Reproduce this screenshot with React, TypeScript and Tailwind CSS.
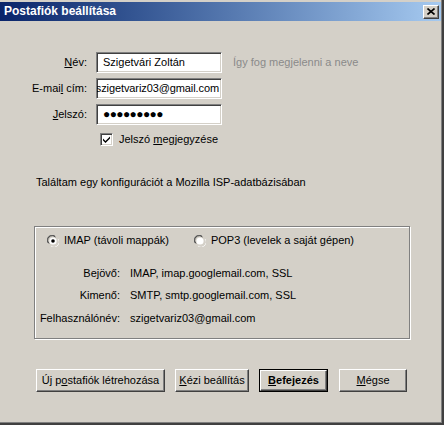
import React from "react";

const sunken =
  "border border-t-[#808080] border-l-[#808080] border-b-white border-r-white shadow-[inset_1px_1px_0_#404040,inset_-1px_-1px_0_#d4d0c8]";
const raised =
  "border border-t-white border-l-white border-b-[#404040] border-r-[#404040] shadow-[inset_-1px_-1px_0_#808080]";

const Radio = ({ checked }: { checked?: boolean }) => (
  <svg width="12" height="12" viewBox="0 0 12 12" className="shrink-0">
    <path d="M1 8 A5 5 0 0 1 8 1" stroke="#808080" strokeWidth="1" fill="none" />
    <path d="M2 8.5 A4 4 0 0 1 8.5 2" stroke="#404040" strokeWidth="1" fill="none" />
    <path d="M11 4 A5 5 0 0 1 4 11" stroke="#ffffff" strokeWidth="1" fill="none" />
    <path d="M10 3.5 A4 4 0 0 1 3.5 10" stroke="#d4d0c8" strokeWidth="1" fill="none" />
    <circle cx="6" cy="6" r="3.6" fill="#ffffff" />
    {checked && <circle cx="6" cy="6" r="1.8" fill="#000000" />}
  </svg>
);

const Checkbox = () => (
  <div className={`w-[13px] h-[13px] bg-white flex items-center justify-center ${sunken}`}>
    <svg width="9" height="9" viewBox="0 0 9 9">
      <path d="M1 3.5 L3.5 6 L8 1.5 L8 3.5 L3.5 8 L1 5.5 Z" fill="#000000" />
    </svg>
  </div>
);

const Btn = ({ children, def, className }: { children: React.ReactNode; def?: boolean; className: string }) => (
  <div className={`h-[23px] ${className} ${def ? "border border-black" : ""}`}>
    <div className={`h-full w-full flex items-center justify-center ${raised}`}>{children}</div>
  </div>
);

export default function App() {
  return (
    <div className="w-[444px] h-[425px] bg-[#d4d0c8] border-r-2 border-b-2 border-[#404040] font-['Liberation_Sans',Arial,sans-serif] text-[11px] text-black leading-[13px]">
      <div className="h-full border-r border-b border-[#808080] flex flex-col">
        <div className="mt-[2px] h-[19px] flex items-center justify-between pl-[4px] pr-[2px] bg-linear-to-r from-[#0a246a] to-[#a6caf0]">
          <span className="font-bold text-white text-[12px]">Postafiók beállítása</span>
          <div className={`w-[16px] h-[14px] bg-[#d4d0c8] flex items-center justify-center ${raised}`}>
            <svg width="8" height="7" viewBox="0 0 8 7">
              <path d="M0.5 0.5 L7.5 6.5 M7.5 0.5 L0.5 6.5" stroke="#000" strokeWidth="1.6" />
            </svg>
          </div>
        </div>

        <div className="pt-[31px] grid grid-cols-[87px_126px_auto] gap-x-[9px] gap-y-[5px] items-center">
          <span className="text-right">
            <span className="underline">N</span>év:
          </span>
          <div className={`h-[21px] bg-white flex items-center pl-[6px] ${sunken}`}>Szigetvári Zoltán</div>
          <span className="pl-[2px] text-[#8a8a8a]">Így fog megjelenni a neve</span>

          <span className="text-right">
            E-mai<span className="underline">l</span> cím:
          </span>
          <div className={`h-[21px] bg-white flex items-center justify-end pr-[2px] overflow-hidden whitespace-nowrap tracking-[-0.1px] ${sunken}`}>
            szigetvariz03@gmail.com
          </div>
          <span />

          <span className="text-right">
            <span className="underline">J</span>elszó:
          </span>
          <div className={`h-[21px] bg-white flex items-center pl-[6px] tracking-[-0.6px] text-[12px] ${sunken}`}>
            ●●●●●●●●●
          </div>
          <span />
        </div>

        <div className="mt-[8px] ml-[100px] flex items-center gap-[6px]">
          <Checkbox />
          <span>
            Jelszó <span className="underline">m</span>egjegyzése
          </span>
        </div>

        <div className="mt-[30px] ml-[36px]">Találtam egy konfigurációt a Mozilla ISP-adatbázisában</div>

        <div className="mt-[37px] ml-[34px] w-[376px] h-[113px] border border-[#808080] shadow-[1px_1px_0_#ffffff,inset_1px_1px_0_#ffffff] flex flex-col">
          <div className="mt-[7px] flex items-center h-[13px]">
            <div className="ml-[12px] flex items-center gap-[5px]">
              <Radio checked />
              <span>IMAP (távoli mappák)</span>
            </div>
            <div className="ml-[25px] flex items-center gap-[5px]">
              <Radio />
              <span>POP3 (levelek a saját gépen)</span>
            </div>
          </div>
          <div className="mt-[20px] grid grid-cols-[85px_auto] gap-x-[10px]">
            <span className="text-right h-[22px]">Bejövő:</span>
            <span className="h-[22px]">IMAP, imap.googlemail.com, SSL</span>
            <span className="text-right h-[23px]">Kimenő:</span>
            <span className="h-[23px]">SMTP, smtp.googlemail.com, SSL</span>
            <span className="text-right">Felhasználónév:</span>
            <span>szigetvariz03@gmail.com</span>
          </div>
        </div>

        <div className="mt-[30px] ml-[36px] flex">
          <Btn className="w-[129px]">
            Új p<span className="underline">o</span>stafiók létrehozása
          </Btn>
          <Btn className="ml-[10px] w-[74px]">
            <span className="underline">K</span>ézi beállítás
          </Btn>
          <Btn def className="ml-[10px] w-[69px]">
            <span className="font-bold">
              <span className="underline">B</span>efejezés
            </span>
          </Btn>
          <Btn className="ml-[11px] w-[68px]">
            <span className="underline">M</span>égse
          </Btn>
        </div>
      </div>
    </div>
  );
}
